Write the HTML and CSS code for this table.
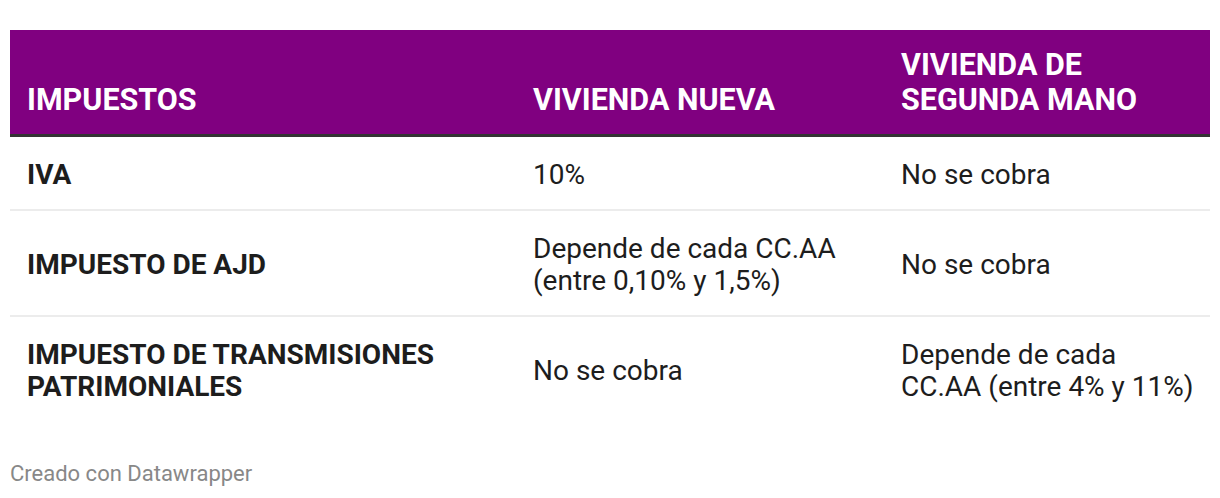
FILE: index.html
```html
<!DOCTYPE html>
<html lang="es">
<head>
<meta charset="UTF-8">
<meta name="viewport" content="width=device-width, initial-scale=1.0">
<title>Impuestos vivienda</title>
<link rel="stylesheet" href="styles.css">
</head>
<body>
<div class="chart">
  <table class="tax-table">
    <thead>
      <tr>
        <th class="col-name">IMPUESTOS</th>
        <th class="col-new">VIVIENDA NUEVA</th>
        <th class="col-used">VIVIENDA DE SEGUNDA MANO</th>
      </tr>
    </thead>
    <tbody>
      <tr>
        <td class="row-name">IVA</td>
        <td>10%</td>
        <td>No se cobra</td>
      </tr>
      <tr>
        <td class="row-name">IMPUESTO DE AJD</td>
        <td>Depende de cada CC.AA (entre 0,10% y 1,5%)</td>
        <td>No se cobra</td>
      </tr>
      <tr>
        <td class="row-name">IMPUESTO DE TRANSMISIONES PATRIMONIALES</td>
        <td>No se cobra</td>
        <td>Depende de cada CC.AA (entre 4% y 11%)</td>
      </tr>
    </tbody>
  </table>
  <div class="footer">Creado con Datawrapper</div>
</div>
</body>
</html>
```

FILE: styles.css
```css
body {
  margin: 0;
  background: #fff;
  color: #1d1d1d;
  font-family: Roboto, "Liberation Sans", sans-serif;
}

.chart {
  padding: 30px 10px 0 10px;
}

.tax-table {
  width: 1200px;
  border-collapse: collapse;
  table-layout: fixed;
  font-size: 28px;
  line-height: 32px;
}

.tax-table th,
.tax-table td {
  box-sizing: border-box;
}

.col-name {
  width: 506px;
}

.col-new {
  width: 368px;
}

.tax-table th {
  background-color: #800080;
  color: #fff;
  font-size: 30.5px;
  font-weight: 700;
  text-align: left;
  vertical-align: bottom;
  line-height: 35px;
  padding: 17px 8px 17px 17px;
  border-bottom: 3px solid #333;
}

.tax-table td {
  padding: 22px 8px 18px 17px;
  vertical-align: middle;
  border-bottom: 2px solid #ececec;
}

.tax-table tbody tr:last-child td {
  border-bottom: none;
}

.row-name {
  font-weight: 700;
}

.footer {
  margin-top: 40px;
  font-size: 22px;
  color: #888;
}
```
